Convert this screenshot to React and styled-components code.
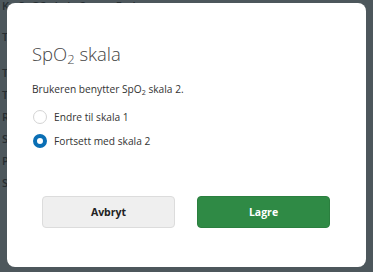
import styled, { createGlobalStyle } from "styled-components";

const GlobalStyle = createGlobalStyle`
  html, body {
    margin: 0;
    padding: 0;
    background: #4d575c;
  }
  body {
    font-family: "Open Sans", "Noto Sans", sans-serif;
  }
`;

const Page = styled.div`
  width: 373px;
  height: 272px;
  overflow: hidden;
  background: #4d575c;
  color: #262d31;
  font-size: 11px;
  padding: 0 0 0 2px;
  box-sizing: border-box;
`;

const BackLine = styled.div`
  height: ${(props) => props.h || 22}px;
  line-height: ${(props) => props.h || 22}px;
  white-space: nowrap;
  font-weight: 600;
`;

const Overlay = styled.div`
  position: fixed;
  inset: 0;
  display: flex;
  align-items: flex-start;
  justify-content: flex-start;
  padding: 3px 0 0 7px;
`;

const Dialog = styled.div`
  width: 359px;
  height: 264px;
  background: #fff;
  border-radius: 8px;
  box-sizing: border-box;
  padding: 37px 25px 0 25px;
  display: flex;
  flex-direction: column;
  color: #333;
`;

const Title = styled.h2`
  margin: 0;
  font-size: 18.5px;
  font-weight: 300;
  color: #444;
  line-height: 28px;
`;

const Sub = styled.sub`
  font-size: 0.7em;
  vertical-align: -0.25em;
  line-height: 0;
`;

const Text = styled.p`
  margin: 13px 0 0 0;
  font-size: 10.2px;
  line-height: 16px;
  color: #333;
`;

const Options = styled.div`
  display: flex;
  flex-direction: column;
  gap: 10px;
  margin-top: 13px;
`;

const Option = styled.label`
  display: flex;
  align-items: center;
  gap: 7px;
  font-size: 10.2px;
  color: #333;
  height: 14px;
`;

const RadioDot = styled.span`
  width: 14px;
  height: 14px;
  box-sizing: border-box;
  border-radius: 50%;
  background: #fff;
  border: ${(props) => (props.checked ? "4px solid #0a6fb5" : "1.5px solid #d4d4d4")};
  margin-left: 1px;
`;

const Actions = styled.div`
  display: flex;
  gap: 22px;
  margin-top: 48px;
  padding-left: 10px;
`;

const Button = styled.button`
  width: 133px;
  height: 32px;
  border-radius: 4px;
  font-family: "Open Sans", "Noto Sans", sans-serif;
  font-size: 10.5px;
  font-weight: 700;
  cursor: pointer;
  ${(props) =>
    props.primary
      ? `background: #2f8a45; border: 1px solid #2b7f3f; color: #fff;`
      : `background: #efefef; border: 1px solid #dcdcdc; color: #222;`}
`;

const App = () => {
  return (
    <Page>
      <GlobalStyle />
      <BackLine h={12}>Ko SpO2 skala 2 &nbsp;&nbsp;&nbsp; &gt;&gt; Endre</BackLine>
      <BackLine h={50}>Tilstand tidligere registrert o.</BackLine>
      <BackLine>Ta a</BackLine>
      <BackLine>Temp A</BackLine>
      <BackLine>Resp ls</BackLine>
      <BackLine>S o</BackLine>
      <BackLine>Puls s</BackLine>
      <BackLine>Sp p</BackLine>
      <Overlay>
        <Dialog>
          <Title>
            SpO<Sub>2</Sub> skala
          </Title>
          <Text>
            Brukeren benytter SpO<Sub>2</Sub> skala 2.
          </Text>
          <Options>
            <Option>
              <RadioDot />
              Endre til skala 1
            </Option>
            <Option>
              <RadioDot checked />
              Fortsett med skala 2
            </Option>
          </Options>
          <Actions>
            <Button>Avbryt</Button>
            <Button primary>Lagre</Button>
          </Actions>
        </Dialog>
      </Overlay>
    </Page>
  );
};

export default App;
